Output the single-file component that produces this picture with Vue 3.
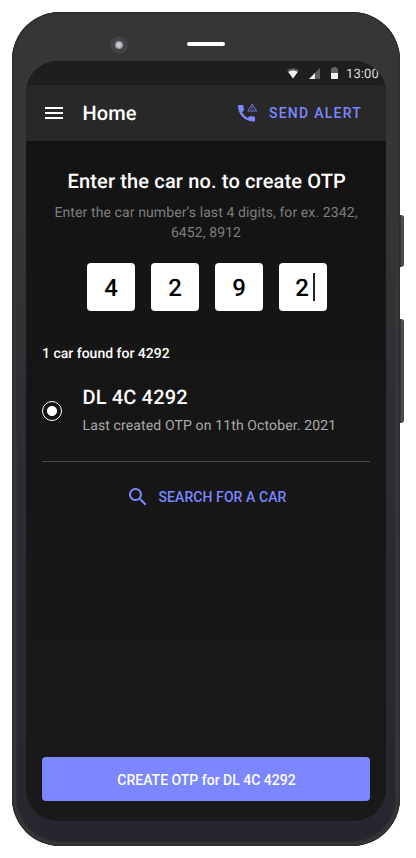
<script setup>
const digits = ['4', '2', '9', '2']
</script>

<template>
  <main class="stage">
    <div class="phone">
      <i class="side-key power"></i>
      <i class="side-key volume"></i>
      <div class="bezel">
        <span class="camera"></span>
        <span class="speaker"></span>
      </div>
      <div class="screen">
        <div class="status">
          <svg class="wifi" width="12" height="11" viewBox="0 0 12 11">
            <path d="M0 2.300C3.600-.5 8.400-.5 12 2.300L6 10.500Z" fill="#5c5c5c" />
            <path d="M1.300 4C4.200 2 7.800 2 10.700 4L6 10.500Z" fill="#f0f0f0" />
          </svg>
          <svg class="signal" width="11" height="11" viewBox="0 0 11 11">
            <path d="M11 0V11H0Z" fill="#5c5c5c" />
            <path d="M6 5V11H0Z" fill="#e8e8e8" />
          </svg>
          <svg class="battery" width="7" height="12" viewBox="0 0 7 12">
            <path d="M2 0H5V1H6.300Q7 1 7 1.700V6H0V1.700Q0 1 .7 1H2Z" fill="#636363" />
            <path d="M0 6H7V11.300Q7 12 6.300 12H.7Q0 12 0 11.300Z" fill="#f0f0f0" />
          </svg>
          <span class="clock">13:00</span>
        </div>
        <header class="appbar">
          <svg class="menu" width="18" height="12" viewBox="0 0 18 12">
            <path d="M0 0H18V2H0ZM0 5H18V7H0ZM0 10H18V12H0Z" fill="#fff" />
          </svg>
          <h1 class="home">Home</h1>
          <button class="alert">
            <svg width="20" height="20" viewBox="0 0 20 20">
              <path d="M1 2H4.400Q5.300 2 5.400 2.900Q5.500 4.600 6 6.200Q6.200 6.900 5.700 7.400L3.900 9.200Q6.200 13.200 9.800 15.100L11.600 13.300Q12.100 12.800 12.800 13Q14.200 13.500 16 13.600Q17 13.700 17 14.600V17.600Q17 18.600 16 18.600C7.200 18.600 0 11.500 0 3Q0 2 1 2Z" fill="#7b86ff" />
              <path d="M14.200 1L18.600 8H9.800Z" fill="none" stroke="#7b86ff" stroke-opacity=".85" stroke-linejoin="round" />
              <path d="M14.200 3.300V5.800M14.200 6.300V7.500" stroke="#7b86ff" stroke-opacity=".85" />
            </svg>
            <span>SEND ALERT</span>
          </button>
        </header>
        <section class="content">
          <h2 class="title">Enter the car no. to create OTP</h2>
          <p class="hint">Enter the car number’s last 4 digits, for ex. 2342, 6452, 8912</p>
          <div class="digits">
            <div v-for="(d, i) in digits" :key="i" class="digit">
              <span>{{ d }}</span><i v-if="i === 3" class="caret"></i>
            </div>
          </div>
          <p class="found">1 car found for 4292</p>
          <div class="car">
            <span class="radio"></span>
            <div>
              <h3 class="plate">DL 4C 4292</h3>
              <p class="last">Last created OTP on 11th October. 2021</p>
            </div>
          </div>
          <button class="search">
            <svg width="18" height="18" viewBox="0 0 18 18">
              <path d="M12.500 11H11.710L11.430 10.730A6.500 6.500 0 1 0 10.730 11.430L11 11.710V12.500L16 17.490L17.490 16ZM6.500 11A4.500 4.500 0 1 1 11 6.500A4.500 4.500 0 0 1 6.500 11Z" fill="#7b86ff" />
            </svg>
            <span>SEARCH FOR A CAR</span>
          </button>
          <button class="create"><span>CREATE OTP for DL 4C 4292</span></button>
        </section>
      </div>
    </div>
  </main>
</template>

<style>
body { background: #fff; }
</style>

<style scoped>
* { box-sizing: border-box; margin: 0; }
button { padding: 0; border: 0; background: none; font: inherit; color: #7b86ff; }
svg { display: block; flex: none; }
.stage { width: 416px; height: 858px; padding: 12px; font-family: Roboto, sans-serif; text-rendering: geometricPrecision; background: #fff; overflow: hidden; }
.phone {
  position: relative; width: 388px; height: 834px; padding: 0 14px; border-radius: 48px;
  background: linear-gradient(#363636 0%, #363637 20%, #2e2d33 50%, #27262f 100%);
  box-shadow: inset 0 0 0 1px #2c2c2c, inset 0 0 0 4px #353535, inset 0 0 0 5px rgba(70, 70, 70, .2);
}
.side-key { position: absolute; left: 388px; width: 4px; border-radius: 0 3px 3px 0; background: linear-gradient(90deg, #2c2c2e, #56565a 50%, #3d3d40); }
.power { top: 203px; height: 52px; }
.volume { top: 307px; height: 104px; }
.bezel { display: flex; align-items: center; height: 49px; padding: 17px 0 0 84px; }
.camera { width: 18px; height: 18px; border-radius: 50%; background: radial-gradient(circle, #c9cbd5 0 1.500px, #b2b4be 2.500px, #8a8c94 3.700px, #444 4.500px, #424242 9px); }
.speaker { width: 38px; height: 4px; margin-left: 59px; margin-bottom: 2px; border-radius: 2px; background: #fff; }
.screen { display: flex; flex-direction: column; width: 360px; height: 760px; border-radius: 32px; overflow: hidden; background: linear-gradient(#131313, #191919); }
.status { display: flex; align-items: center; height: 24px; padding-left: 261px; background: #1e1e1e; flex: none; }
.signal { margin-left: 10px; }
.battery { margin-left: 11px; }
.clock { margin-left: 8px; font-size: 13px; line-height: 24px; padding-top: 3px; letter-spacing: .1px; color: #ddd; }
.appbar { display: flex; align-items: center; height: 56px; padding: 0 24px 0 19px; background: #282828; flex: none; }
.home { margin-left: 19.500px; font-size: 20px; line-height: 28px; font-weight: 500; letter-spacing: .1px; color: #fff; }
.alert { display: flex; align-items: center; margin-left: auto; font-size: 14px; font-weight: 500; letter-spacing: 1.250px; }
.alert span { margin-left: 11px; line-height: 20px; }
.content { display: flex; flex: 1; flex-direction: column; padding: 28px 16px 20px; }
.title { padding-left: 1.500px; text-align: center; font-size: 20px; line-height: 24px; font-weight: 500; letter-spacing: .150px; color: #fff; }
.hint { margin-top: 10px; text-align: center; font-size: 14px; line-height: 20px; letter-spacing: .1px; color: #7e7e7e; }
.digits { display: flex; justify-content: center; gap: 16px; margin: 20px 0 0 2px; }
.digit { display: flex; align-items: center; justify-content: center; position: relative; width: 48px; height: 48px; padding-top: 2px; border-radius: 4px; background: #fff; color: #000; font-size: 24px; font-weight: 500; }
.digit:last-child { padding-right: 2px; }
.caret { position: absolute; left: 34px; top: 10px; width: 2px; height: 28px; background: #222; }
.found { margin-top: 33px; font-size: 14px; line-height: 20px; font-weight: 500; color: #fff; }
.car { display: flex; align-items: center; gap: 20.500px; height: 98px; padding-bottom: 3px; border-bottom: 1px solid #494949; }
.radio { width: 20px; height: 20px; flex: none; border: 1px solid #fff; border-radius: 50%; background: radial-gradient(circle, #fff 4.700px, transparent 5.300px); }
.plate { margin-bottom: 8px; font-size: 20px; line-height: 22px; font-weight: 500; letter-spacing: .150px; color: #fff; }
.last { font-size: 14px; line-height: 20px; letter-spacing: .130px; color: #aaa; }
.search { display: flex; align-items: center; align-self: center; margin-top: 25px; padding-left: 3px; height: 20px; font-size: 14px; font-weight: 500; letter-spacing: .080px; }
.search span { margin-left: 12px; }
.create { height: 44px; margin-top: auto; padding: 2px 0 0 1px; border-radius: 4px; background: #7c87ff; color: #fff; font-size: 14px; font-weight: 500; }
</style>
